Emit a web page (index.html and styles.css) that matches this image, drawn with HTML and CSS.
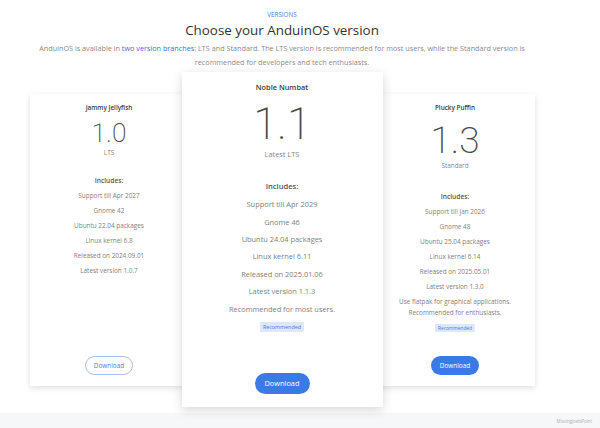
FILE: index.html
```html
<!DOCTYPE html>
<html lang="en">
<head>
<meta charset="utf-8">
<title>Choose your AnduinOS version</title>
<link rel="stylesheet" href="styles.css">
</head>
<body>
<div class="page">
  <header class="intro">
    <div class="eyebrow">VERSIONS</div>
    <h1 class="title">Choose your AnduinOS version</h1>
    <p class="lead">AnduinOS is available in <a class="link" href="#">two version branches</a>: LTS and Standard. The LTS version is recommended for most users, while the Standard version is recommended for developers and tech enthusiasts.</p>
  </header>

  <section class="plans">
    <article class="card card-side card-left">
      <div class="name">Jammy Jellyfish</div>
      <div class="num num-left">1.0</div>
      <div class="kind">LTS</div>
      <div class="includes">Includes:</div>
      <ul class="items">
        <li>Support till Apr 2027</li>
        <li>Gnome 42</li>
        <li>Ubuntu 22.04 packages</li>
        <li>Linux kernel 6.8</li>
        <li>Released on 2024.09.01</li>
        <li>Latest version 1.0.7</li>
      </ul>
      <a class="btn btn-outline" href="#">Download</a>
    </article>

    <article class="card card-main">
      <div class="name">Noble Numbat</div>
      <div class="num">1.1</div>
      <div class="kind">Latest LTS</div>
      <div class="includes">Includes:</div>
      <ul class="items">
        <li>Support till Apr 2029</li>
        <li>Gnome 46</li>
        <li>Ubuntu 24.04 packages</li>
        <li>Linux kernel 6.11</li>
        <li>Released on 2025.01.06</li>
        <li>Latest version 1.1.3</li>
        <li>Recommended for most users.</li>
      </ul>
      <span class="badge">Recommended</span>
      <a class="btn btn-fill" href="#">Download</a>
    </article>

    <article class="card card-side card-right">
      <div class="name">Plucky Puffin</div>
      <div class="num num-right">1.3</div>
      <div class="kind">Standard</div>
      <div class="includes">Includes:</div>
      <ul class="items">
        <li>Support till Jan 2026</li>
        <li>Gnome 48</li>
        <li>Ubuntu 25.04 packages</li>
        <li>Linux kernel 6.14</li>
        <li>Released on 2025.05.01</li>
        <li>Latest version 1.3.0</li>
        <li>Use flatpak for graphical applications. Recommended for enthusiasts.</li>
      </ul>
      <span class="badge">Recommended</span>
      <a class="btn btn-fill" href="#">Download</a>
    </article>
  </section>

  <footer class="foot">
    <span class="foot-text">MissingJoelsPoint</span>
  </footer>
</div>
</body>
</html>
```

FILE: styles.css
```css
* { box-sizing: border-box; }

html, body {
  margin: 0;
  padding: 0;
  background: #ffffff;
}

body {
  font-family: "Open Sans", "Noto Sans", sans-serif;
  color: #444;
}

.page {
  width: 600px;
  height: 428px;
  overflow: hidden;
  display: flex;
  flex-direction: column;
}

.intro {
  width: 564px;
  display: flex;
  flex-direction: column;
  align-items: center;
  text-align: center;
}

.eyebrow {
  padding-top: 10px;
  font-size: 6.3px;
  line-height: 10px;
  color: #4a80e0;
}

.title {
  margin: 0;
  font-size: 13.4px;
  line-height: 21px;
  font-weight: 400;
  color: #333;
}

.lead {
  margin: 0;
  width: 500px;
  font-size: 7.25px;
  line-height: 14px;
  color: #8a8a8a;
}

.link {
  color: #3a72d8;
  text-decoration: none;
}

.plans {
  width: 564px;
  margin-top: 3px;
  display: flex;
  justify-content: center;
  align-items: center;
}

.card {
  background: #fff;
  display: flex;
  flex-direction: column;
  align-items: center;
  text-align: center;
}

.card-side {
  width: 159px;
  height: 292px;
  padding: 9px 0 11px;
  box-shadow: 0 2px 6px rgba(0, 0, 0, 0.13);
}

.card-main {
  position: relative;
  z-index: 1;
  width: 201px;
  height: 335px;
  margin: 0 -7px;
  padding: 9px 0 13.5px;
  box-shadow: 0 3px 10px rgba(0, 0, 0, 0.16);
}

.name {
  font-size: 6.4px;
  line-height: 10px;
  font-weight: 600;
  color: #3a3a3a;
}

.num {
  font-family: "Roboto", "Lato", sans-serif;
  font-weight: 200;
  color: #4a4a4a;
}

.num-left {
  margin-top: 5px;
  font-size: 26.4px;
  line-height: 30px;
}

.num-right {
  margin-top: 8px;
  font-size: 37px;
  line-height: 40px;
}

.kind {
  margin-top: 1px;
  font-size: 6.4px;
  line-height: 8px;
  color: #888;
}

.card-right .kind { line-height: 10px; margin-top: 0; }

.includes {
  font-size: 6.6px;
  line-height: 12px;
  font-weight: 600;
  color: #555;
}

.card-left .includes { margin-top: 18px; }
.card-right .includes { margin-top: 20px; }

.items {
  list-style: none;
  margin: 1px 0 0;
  padding: 0 8px;
  font-size: 6.4px;
  color: #808080;
}

.items li {
  line-height: 11px;
  padding: 2px 0;
}

.badge {
  margin-top: 4.5px;
  padding: 0 3px;
  background: #dde9fb;
  color: #3d78e0;
  font-size: 4.8px;
  line-height: 8px;
  border-radius: 1px;
}

.btn {
  margin-top: auto;
  display: inline-flex;
  align-items: center;
  justify-content: center;
  text-decoration: none;
  border-radius: 10px;
  font-size: 6.4px;
}

.card-side .btn {
  width: 48px;
  height: 19px;
}

.btn-outline {
  border: 1px solid #a9bfe9;
  color: #4a7fdd;
  background: #fff;
}

.btn-fill {
  background: #3a7ae6;
  color: #fff;
}

/* main card sizes */
.card-main .name {
  font-size: 7.4px;
  line-height: 12px;
}

.card-main .num {
  margin-top: 7.5px;
  font-size: 43.6px;
  line-height: 48px;
}

.card-main .kind {
  margin-top: 0;
  font-size: 7.4px;
  line-height: 11px;
}

.card-main .includes {
  margin-top: 18.8px;
  font-size: 7.6px;
  line-height: 17.4px;
}

.card-main .items {
  margin-top: 0;
  font-size: 7.4px;
}

.card-main .items li {
  line-height: 12.4px;
  padding: 2.5px 0;
}

.card-main .badge {
  margin-top: 4px;
  font-size: 5.4px;
  line-height: 10px;
  padding: 0 3px;
}

.card-main .btn {
  width: 55px;
  height: 21px;
  border-radius: 11px;
  font-size: 7.4px;
}

.foot {
  margin-top: auto;
  height: 15px;
  background: #f6f7f9;
  display: flex;
  align-items: center;
  justify-content: flex-end;
  padding-right: 8px;
}

.foot-text {
  font-size: 4.4px;
  color: #b0b0b0;
}
```
